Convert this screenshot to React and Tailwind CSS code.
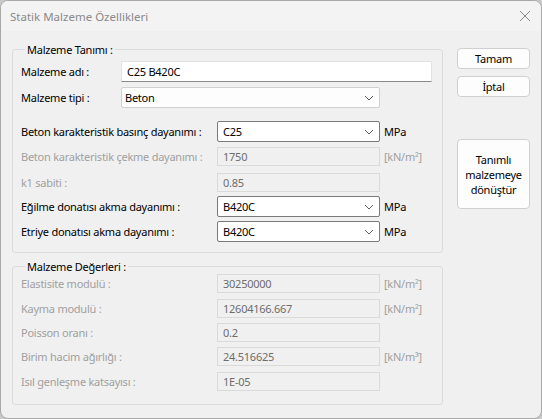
import React from 'react';

const font = { fontFamily: '"Noto Sans", "Open Sans", Arial, sans-serif' };

function Chevron() {
  return (
    <svg width="10" height="6" viewBox="0 0 10 6" className="shrink-0">
      <polyline points="1,1 5,5 9,1" fill="none" stroke="#5f5f5f" strokeWidth="1" />
    </svg>
  );
}

function Select({ value }) {
  return (
    <div className="flex items-center justify-between h-[21px] w-[163px] pl-[5px] pr-[5px] bg-white border border-[#7a7a7a] rounded-[2px] text-black">
      <span>{value}</span>
      <Chevron />
    </div>
  );
}

function Disabled({ value }) {
  return (
    <div className="flex items-center h-[19px] w-[163px] pl-[5px] border border-[#dadada] bg-[#f0f0f0] text-[#6d6d6d]">
      {value}
    </div>
  );
}

function Row({ label, dim, children, unit, unitDim, className = '' }) {
  return (
    <div className={`flex items-center ${className}`}>
      <div className={`w-[196px] shrink-0 whitespace-nowrap ${dim ? 'text-[#a0a0a0]' : 'text-black'}`}>{label}</div>
      {children}
      {unit && (
        <span className={`ml-[4px] whitespace-nowrap ${unitDim ? 'text-[#a0a0a0]' : 'text-black'}`}>{unit}</span>
      )}
    </div>
  );
}

function Button({ children, className = '' }) {
  return (
    <div
      className={`flex flex-col items-center justify-center text-center w-[73px] bg-[#fdfdfd] border border-[#d0d0d0] rounded-[4px] text-black ${className}`}
    >
      {children}
    </div>
  );
}

export default function App() {
  return (
    <div className="w-[542px] h-[419px] bg-[#c8c8c8] text-[11px] leading-[15px] tracking-[-0.25px]" style={font}>
      <div className="w-[542px] h-[419px] flex flex-col rounded-[8px] border border-[#a8a8a8] bg-[#f0f0f0] overflow-hidden">
        {/* Title bar */}
        <div className="h-[30px] shrink-0 flex items-center justify-between bg-[#f3f3f3] pl-[9px] pr-[10px]">
          <span className="text-[11.5px] tracking-normal text-[#8a8a8a]">Statik Malzeme Özellikleri</span>
          <svg width="12" height="12" viewBox="0 0 12 12">
            <line x1="1" y1="1" x2="11" y2="11" stroke="#8a8a8a" strokeWidth="1" />
            <line x1="11" y1="1" x2="1" y2="11" stroke="#8a8a8a" strokeWidth="1" />
          </svg>
        </div>

        {/* Body */}
        <div className="flex pl-[11px] pt-[11px]">
          <div className="w-[431px] flex flex-col">
            {/* Malzeme Tanımı */}
            <fieldset className="border border-[#dcdcdc] rounded-[3px] h-[211px] pl-[8px] pt-[4px]">
              <legend className="ml-[4px] px-[2px] text-black">Malzeme Tanımı :</legend>
              <div className="flex items-center">
                <div className="w-[100px] shrink-0 whitespace-nowrap text-black">Malzeme adı :</div>
                <div className="flex items-center h-[21px] w-[311px] pl-[5px] bg-white border border-[#e3e3e3] border-b-[#8a8a8a] text-black">
                  C25 B420C
                </div>
              </div>
              <div className="flex items-center mt-[5px]">
                <div className="w-[100px] shrink-0 whitespace-nowrap text-black">Malzeme tipi :</div>
                <div className="flex items-center justify-between h-[21px] w-[259px] pl-[3px] pr-[5px] bg-[#fdfdfd] border border-[#d0d0d0] rounded-[2px] text-black">
                  <span>Beton</span>
                  <Chevron />
                </div>
              </div>
              <Row label="Beton karakteristik basınç dayanımı :" unit="MPa" className="mt-[13px]">
                <Select value="C25" />
              </Row>
              <Row label="Beton karakteristik çekme dayanımı :" dim unit="[kN/m²]" unitDim className="mt-[5px]">
                <Disabled value="1750" />
              </Row>
              <Row label="k1 sabiti :" dim className="mt-[7px]">
                <Disabled value="0.85" />
              </Row>
              <Row label="Eğilme donatısı akma dayanımı :" unit="MPa" className="mt-[4px]">
                <Select value="B420C" />
              </Row>
              <Row label="Etriye donatısı akma dayanımı :" unit="MPa" className="mt-[4px]">
                <Select value="B420C" />
              </Row>
            </fieldset>

            {/* Malzeme Değerleri */}
            <fieldset className="mt-[6px] border border-[#dcdcdc] rounded-[3px] h-[146px] pl-[8px]">
              <legend className="ml-[4px] px-[2px] text-black">Malzeme Değerleri :</legend>
              <Row label="Elastisite modulü :" dim unit="[kN/m²]" unitDim>
                <Disabled value="30250000" />
              </Row>
              <Row label="Kayma modulü :" dim unit="[kN/m²]" unitDim className="mt-[6px]">
                <Disabled value="12604166.667" />
              </Row>
              <Row label="Poisson oranı :" dim className="mt-[5px]">
                <Disabled value="0.2" />
              </Row>
              <Row label="Birim hacim ağırlığı :" dim unit="[kN/m³]" unitDim className="mt-[5px]">
                <Disabled value="24.516625" />
              </Row>
              <Row label="Isıl genleşme katsayısı :" dim className="mt-[6px]">
                <Disabled value="1E-05" />
              </Row>
            </fieldset>
          </div>

          {/* Buttons */}
          <div className="ml-[14px] pt-[6px] flex flex-col">
            <Button className="h-[21px]">Tamam</Button>
            <Button className="h-[21px] mt-[7px]">İptal</Button>
            <Button className="h-[70px] mt-[42px]">
              <span>Tanımlı</span>
              <span>malzemeye</span>
              <span>dönüştür</span>
            </Button>
          </div>
        </div>
      </div>
    </div>
  );
}
